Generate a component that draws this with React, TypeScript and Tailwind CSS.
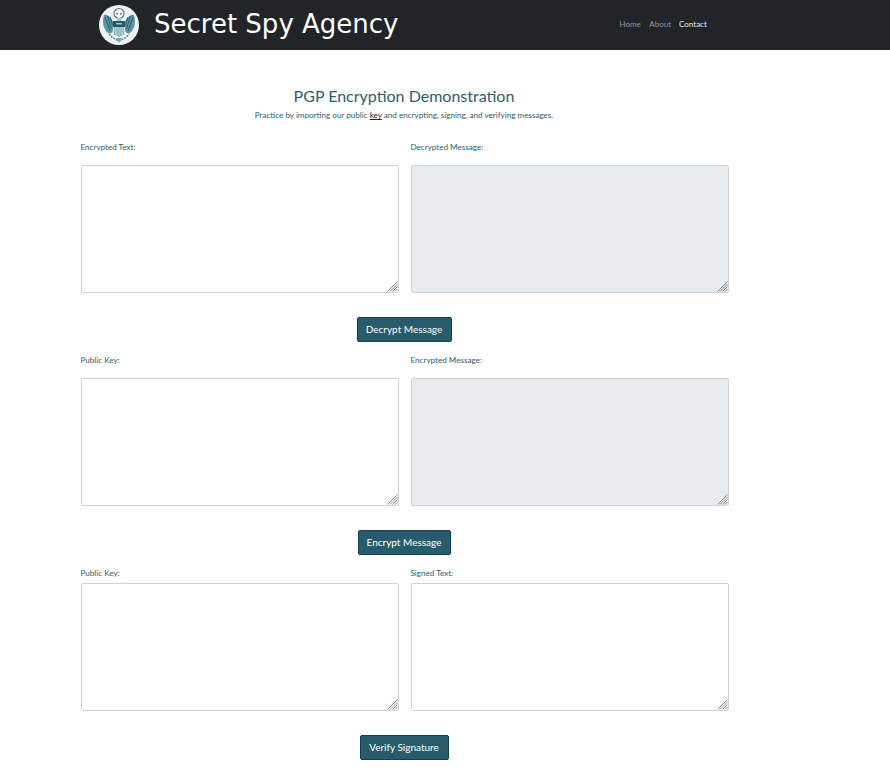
const LABEL = 'block h-[14px] -ml-[0.5px] text-[8.1px] leading-[14px] text-[#2b6070]';
const AREA = 'block w-[318px] h-[128px] resize-none rounded-[2px] border border-[#ced4da] bg-white';
const AREA_OFF = 'block w-[318px] h-[128px] resize-none rounded-[2px] border border-[#ced4da] bg-[#e9ecef]';
const BUTTON = 'h-[25px] rounded-[2px] border border-[#173f4a] bg-[#265c6b] text-[10px] text-white';

function Logo() {
  return (
    <svg width="40" height="40" viewBox="0 0 40 40" className="shrink-0">
      <circle cx="20" cy="20" r="20" fill="#eef4f4" />
      {/* wings */}
      <path d="M14 17 C12 11 7 9 5 10 C3 16 4 24 9 28 C11 29 13 28 14 26 Z" fill="#5b95a2" />
      <path d="M26 17 C28 11 33 9 35 10 C37 16 36 24 31 28 C29 29 27 28 26 26 Z" fill="#5b95a2" />
      <path d="M6 12 L11 26 M8.5 11 L12.5 24 M11 12 L13.5 20 M34 12 L29 26 M31.5 11 L27.5 24 M29 12 L26.5 20" stroke="#1f5a69" strokeWidth="0.9" fill="none" />
      {/* skull */}
      <circle cx="20" cy="8.5" r="5" fill="#f7fafa" stroke="#4d7f8b" strokeWidth="1.2" />
      <circle cx="18.2" cy="8.8" r="1" fill="#b5484f" />
      <circle cx="21.8" cy="8.8" r="1" fill="#b5484f" />
      <path d="M17.5 13 H22.5 L22 16 H18 Z" fill="#a9c4ca" />
      {/* shield */}
      <rect x="14" y="16" width="12" height="6" fill="#1f5a69" />
      <rect x="17" y="18" width="6" height="1.5" fill="#a9c4ca" />
      <path d="M14 22 H26 V28 C26 30 23 31 20 32 C17 31 14 30 14 28 Z" fill="#f2f6f6" />
      <path d="M15.8 22 V30 M18 22 V31 M20 22 V32 M22 22 V31 M24.2 22 V30" stroke="#4d8794" strokeWidth="1" />
      {/* tail */}
      <path d="M10 29 C13 33 16 34 20 36 C24 34 27 33 30 29" stroke="#5b909c" strokeWidth="1.6" fill="none" strokeDasharray="2 1" />
      <path d="M17 33 L20 38 L23 33 Z" fill="#7ea5ae" />
    </svg>
  );
}

function Grip() {
  return (
    <svg width="11" height="11" viewBox="0 0 11 11" className="absolute right-px bottom-px pointer-events-none">
      <path d="M0.5 10.5 L10.5 0.5 M3 10.5 L10.5 3 M5.5 10.5 L10.5 5.5 M8 10.5 L10.5 8" stroke="#8a8d90" strokeWidth="1" />
    </svg>
  );
}

function Field({ label, off, tight }: { label: string; off?: boolean; tight?: boolean }) {
  return (
    <div>
      <label className={tight ? `${LABEL} mb-[3px]` : `${LABEL} mb-[11px]`}>{label}</label>
      <div className="relative">
        <textarea className={off ? AREA_OFF : AREA} disabled={off} />
        <Grip />
      </div>
    </div>
  );
}

function Action({ label, width }: { label: string; width: string }) {
  return (
    <div className="flex justify-center mt-[24px] pr-[2px]">
      <button className={`${BUTTON} ${width}`}>{label}</button>
    </div>
  );
}

export default function App() {
  return (
    <div className="min-h-[782px] bg-white font-['Lato',sans-serif]">
      <header className="h-[50px] bg-[#212529] flex items-center pl-[99px]">
        <Logo />
        <span className="ml-[15px] pb-[2px] font-['DejaVu_Sans',sans-serif] text-[26px] text-white">Secret Spy Agency</span>
        <nav className="ml-[221px] pb-[2px] flex text-[8px]">
          <a className="text-white/50">Home</a>
          <a className="ml-[8.5px] text-white/50">About</a>
          <a className="ml-2 text-white/90">Contact</a>
        </nav>
      </header>

      <main className="w-[648px] ml-[81px]">
        <div className="pr-[2px]">
          <h1 className="pt-[35px] text-center text-[16px] leading-[22px] text-[#2b6070]">PGP Encryption Demonstration</h1>
          <p className="mt-[2px] text-center text-[8.1px] leading-[12px] text-[#2b6070]">
            Practice by importing our public <span className="underline text-[#212529]">key</span> and encrypting, signing, and verifying messages.
          </p>
        </div>

        <div className="mt-[19px] grid grid-cols-[318px_318px] gap-x-3">
          <Field label="Encrypted Text:" />
          <Field label="Decrypted Message:" off />
        </div>
        <Action label="Decrypt Message" width="w-[95px]" />

        <div className="mt-[11px] grid grid-cols-[318px_318px] gap-x-3">
          <Field label="Public Key:" />
          <Field label="Encrypted Message:" off />
        </div>
        <Action label="Encrypt Message" width="w-[93px]" />

        <div className="mt-[11px] grid grid-cols-[318px_318px] gap-x-3">
          <Field label="Public Key:" tight />
          <Field label="Signed Text:" tight />
        </div>
        <Action label="Verify Signature" width="w-[89px]" />
      </main>
    </div>
  );
}
